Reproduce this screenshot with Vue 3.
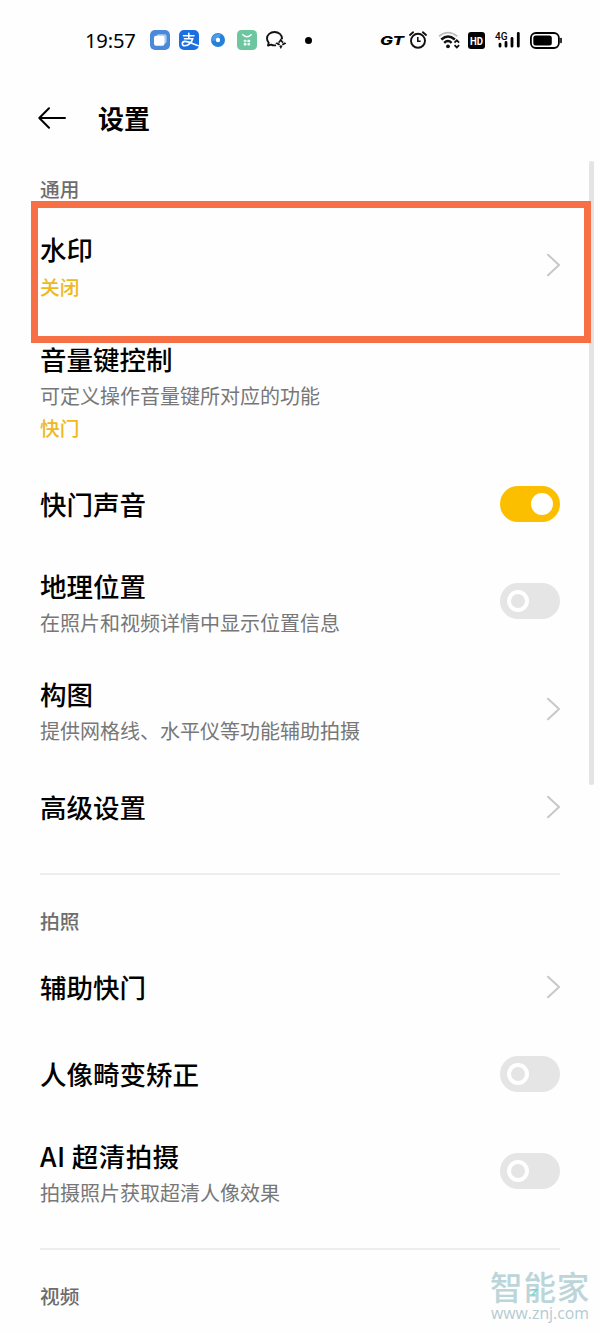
<script setup>
const sections = [
  {
    label: '通用',
    rows: [
      { title: '水印', value: '关闭', control: 'chevron', kind: 'double' },
      { title: '音量键控制', desc: '可定义操作音量键所对应的功能', value: '快门', kind: 'triple' },
      { title: '快门声音', control: 'on', kind: 'single' },
      { title: '地理位置', desc: '在照片和视频详情中显示位置信息', control: 'off', kind: 'double' },
      { title: '构图', desc: '提供网格线、水平仪等功能辅助拍摄', control: 'chevron', kind: 'double' },
      { title: '高级设置', control: 'chevron', kind: 'single' },
    ],
  },
  {
    label: '拍照',
    rows: [
      { title: '辅助快门', control: 'chevron', kind: 'single' },
      { title: '人像畸变矫正', control: 'off', kind: 'single' },
      { title: 'AI 超清拍摄', desc: '拍摄照片获取超清人像效果', control: 'off', kind: 'double latin' },
    ],
  },
  { label: '视频', rows: [] },
]
</script>

<template>
  <div class="screen">
    <div class="status">
      <div class="group left">
        <span class="time">19:57</span>
        <svg class="app-tile" width="20" height="20" viewBox="0 0 20 20">
          <rect width="20" height="20" rx="5" fill="#4a8ad8" />
          <rect x="6.6" y="4.2" width="10" height="9.4" rx="2" fill="#a9cbf3" />
          <rect x="4" y="5.8" width="10.5" height="10" rx="2" fill="#fff" />
        </svg>
        <svg class="app-pay" width="20" height="20" viewBox="0 0 20 20">
          <rect width="20" height="20" rx="5" fill="#1b6fe0" />
          <g fill="none" stroke="#fff" stroke-width="1.6" stroke-linecap="round">
            <path d="M4.5 5.7H15M9.8 3.2V8.7M5.5 8.7H13.7C12.8 12.2 9.4 15.8 5.9 15.8C2.5 15.8 2.4 11.5 6 11.4C9 11.3 13 13.7 19.5 15.7" />
          </g>
        </svg>
        <svg class="app-dot" width="14" height="14" viewBox="0 0 14 14">
          <circle cx="7" cy="7" r="7" fill="#2581d8" />
          <path d="M1 8A6 6 0 0 1 10 1.8L7 7Z" fill="#4a9be8" />
          <circle cx="7" cy="7" r="2.2" fill="#fff" />
        </svg>
        <svg class="app-shop" width="20" height="20" viewBox="0 0 20 20">
          <rect width="20" height="20" rx="4.5" fill="#6cc6a0" />
          <path d="M5.8 4.8Q10 8.8 14.2 4.8" fill="none" stroke="#fff" stroke-width="1.5" stroke-linecap="round" />
          <g fill="#fff">
            <rect x="6.7" y="9.7" width="2.8" height="2.5" rx=".8" opacity=".8" />
            <rect x="10.4" y="9.7" width="2.8" height="2.5" rx=".8" />
            <rect x="6.7" y="13" width="2.8" height="2.5" rx=".8" />
            <rect x="10.4" y="13" width="2.8" height="2.5" rx=".8" opacity=".85" />
          </g>
        </svg>
        <svg class="chat" width="20" height="18" viewBox="0 0 20 18">
          <path d="M10 14.2Q7.4 14.8 5.2 13.6L2 14.5L2.7 11.6C1.4 10.3 1 9 1 7.5C1 3.8 4.3 1 8.5 1C12.8 1 16 3.8 16 7.5V8.2" fill="none" stroke="#111" stroke-width="1.9" stroke-linejoin="round" />
          <path d="M14.8 8.8L16.2 11L18.9 12.3L16.2 13.7L14.8 16.3L13.4 13.7L10.9 12.3L13.4 11Z" fill="#fff" stroke="#111" stroke-width="1.6" stroke-dasharray="3.8 1" />
        </svg>
        <i class="more"></i>
      </div>
      <div class="group right">
        <svg width="25" height="18" viewBox="0 0 25 18">
          <text x="0" y="13.8" class="gt" textLength="24" lengthAdjust="spacingAndGlyphs">GT</text>
        </svg>
        <svg class="alarm" width="18" height="18" viewBox="0 0 18 18" fill="none" stroke="#111">
          <circle cx="9" cy="9.8" r="7" stroke-width="1.9" />
          <path d="M8.8 6V10.2H11.7" stroke-width="1.6" />
          <path d="M1 4L4.1 1.3M13.9 1.3L17 4" stroke-width="1.9" stroke-linecap="round" />
        </svg>
        <svg class="wifi" width="23" height="18" viewBox="0 0 23 18" fill="none">
          <path d="M1 5.3Q10 -2 19.3 5.3" stroke="#bcbcbc" stroke-width="1.8" />
          <path d="M3.3 8.5Q10 2.4 16.9 8.5" stroke="#111" stroke-width="2.5" />
          <path d="M6.2 11.8Q10 8.3 13.6 11.8" stroke="#111" stroke-width="2.5" />
          <circle cx="10" cy="15.3" r="1.9" fill="#111" />
          <path d="M16.5 11.6L18.8 9.3L21.1 11.6M16.5 14.1L18.8 16.4L21.1 14.1" stroke="#111" stroke-width="1.8" />
        </svg>
        <svg class="hd" width="17" height="17" viewBox="0 0 17 17">
          <rect width="17" height="17" rx="3" fill="#000" />
          <text x="2" y="12.9" class="hd-text" textLength="13" lengthAdjust="spacingAndGlyphs">HD</text>
        </svg>
        <svg class="signal" width="26" height="24" viewBox="0 -3 26 24">
          <text x="0" y="8.5" class="net" textLength="12.5" lengthAdjust="spacingAndGlyphs">4G</text>
          <g stroke="#000" stroke-width="2.8" stroke-linecap="round">
            <path d="M5 13.2V15.2M11 11.5V15.2M17 7.5V15.2M23.3 2.3V15.2" />
          </g>
        </svg>
        <svg class="battery" width="32" height="17" viewBox="0 0 32 17">
          <rect x=".9" y="1" width="28" height="15" rx="5" fill="none" stroke="#000" stroke-width="1.8" />
          <rect x="3.3" y="3.4" width="18.5" height="10.2" rx="2.5" fill="#000" />
          <path d="M31 6.5V10.5" stroke="#000" stroke-width="1.6" stroke-linecap="round" />
        </svg>
      </div>
    </div>

    <header class="header">
      <svg width="28" height="22" viewBox="0 0 28 22" fill="none" stroke="#000" stroke-width="2" stroke-linecap="round" stroke-linejoin="round">
        <path d="M27 11H1.3M11 1.3L1.3 11L11 20.7" />
      </svg>
      <h1>设置</h1>
    </header>

    <section v-for="section in sections" :key="section.label" class="section">
      <h2>{{ section.label }}</h2>
      <div v-for="row in section.rows" :key="row.title" class="row" :class="row.kind">
        <div class="texts">
          <div class="title">{{ row.title }}</div>
          <div v-if="row.desc" class="desc">{{ row.desc }}</div>
          <div v-if="row.value" class="value">{{ row.value }}</div>
        </div>
        <svg v-if="row.control === 'chevron'" class="chevron" width="14" height="24" viewBox="0 0 14 24">
          <path d="M2 1.7L13 12L2 22.3" fill="none" stroke="#c8c8c8" stroke-width="2" stroke-linecap="round" stroke-linejoin="round" />
        </svg>
        <div v-else-if="row.control" class="toggle" :class="row.control"><i></i></div>
      </div>
    </section>

    <div class="scrollbar"></div>
    <div class="highlight"></div>
    <div class="watermark">
      <div class="brand">智能家</div>
      <svg class="brand-mark" width="9" height="9" viewBox="0 0 9 9"><path d="M1.5 1.5H7L2 7H5" fill="none" stroke="#66dcd0" stroke-width="1.2" /></svg>
      <svg class="site" width="100" height="28" viewBox="0 0 100 28">
        <text x="1" y="17" textLength="98" lengthAdjust="spacingAndGlyphs">www.znj.com</text>
      </svg>
    </div>
  </div>
</template>

<style>
body { background: #fefefe; }
</style>

<style scoped>
.screen {
  position: relative;
  box-sizing: border-box;
  width: 600px;
  height: 1333px;
  overflow: hidden;
  background: #fefefe;
  color: #000;
  font-family: "Noto Sans CJK SC", sans-serif;
}
.status {
  display: flex;
  justify-content: space-between;
  height: 80px;
  padding: 0 38px 0 85px;
}
.group { display: flex; align-items: center; }
.group svg { flex: none; }
.time {
  width: 51px;
  margin-right: 14px;
  font: 400 20.2px/30px "Noto Sans", sans-serif;
  letter-spacing: -0.2px;
  white-space: nowrap;
}
.app-pay { margin-left: 9px; }
.app-dot { margin-left: 12px; }
.app-shop { margin-left: 12px; }
.chat { margin-left: 9px; }
.more { width: 7px; height: 7px; margin-left: 19px; border-radius: 50%; background: #000; }
.gt { font: italic 800 12px Inter, sans-serif; }
.alarm { margin-left: 4px; }
.wifi { margin-left: 11px; }
.hd { margin-left: 7px; }
.hd-text { font: 700 11.5px Roboto, sans-serif; fill: #fff; }
.signal { margin-left: 10px; }
.net { font: 500 11.5px Roboto, sans-serif; }
.battery { margin-left: 9px; }

.header {
  display: flex;
  align-items: center;
  height: 76px;
  padding-left: 38px;
}
h1 { margin: 0 0 0 32px; font-size: 26px; font-weight: 700; line-height: 40px; }

.section { margin: 0 40px; }
.section + .section { border-top: 2px solid #ededed; }
h2 {
  height: 55px;
  margin: 0;
  color: #6d6d6d;
  font-size: 19.7px;
  font-weight: 500;
  line-height: 66px;
}
.section + .section h2 { height: 68px; line-height: 92px; }
.section:nth-of-type(1) { height: 717px; }
.section:nth-of-type(2) { height: 373px; }
.row { display: flex; align-items: center; justify-content: space-between; }
.single { height: 87px; }
.double { height: 108px; }
.triple { height: 141px; }
.triple .texts { padding-top: 2px; }
.title { font-size: 26.5px; font-weight: 500; line-height: 42px; }
.latin .title { letter-spacing: 0.4px; }
.desc, .value { font-size: 20px; line-height: 31px; color: #777; }
.value { color: #edb91d; font-weight: 500; font-size: 19.7px; line-height: 33px; }
.toggle {
  display: flex;
  align-items: center;
  box-sizing: border-box;
  width: 60px;
  height: 36px;
  padding: 0 7px;
  border-radius: 18px;
  background: #e5e5e5;
}
.toggle i { box-sizing: border-box; width: 22px; height: 22px; border: 4.5px solid #fff; border-radius: 50%; }
.toggle.on { justify-content: flex-end; background: #fbbf00; }
.toggle.on i { background: #fff; }

.scrollbar {
  position: absolute;
  left: 589px;
  top: 161px;
  width: 5px;
  height: 624px;
  border-radius: 2px;
  background: #e4e4e4;
}
.highlight {
  position: absolute;
  left: 31px;
  top: 201px;
  box-sizing: border-box;
  width: 560px;
  height: 142px;
  border: 7px solid #f66f45;
}
.watermark { position: absolute; left: 490px; top: 1269px; width: 110px; }
.brand { color: #bcd5d9; font-size: 32.5px; letter-spacing: 0.9px; font-weight: 500; line-height: 33px; white-space: nowrap; }
.brand-mark { position: absolute; left: 40px; top: 19px; }
.site { display: block; overflow: visible; }
.site text { fill: #b4cbd1; font: 400 17px "Open Sans", sans-serif; }
</style>
